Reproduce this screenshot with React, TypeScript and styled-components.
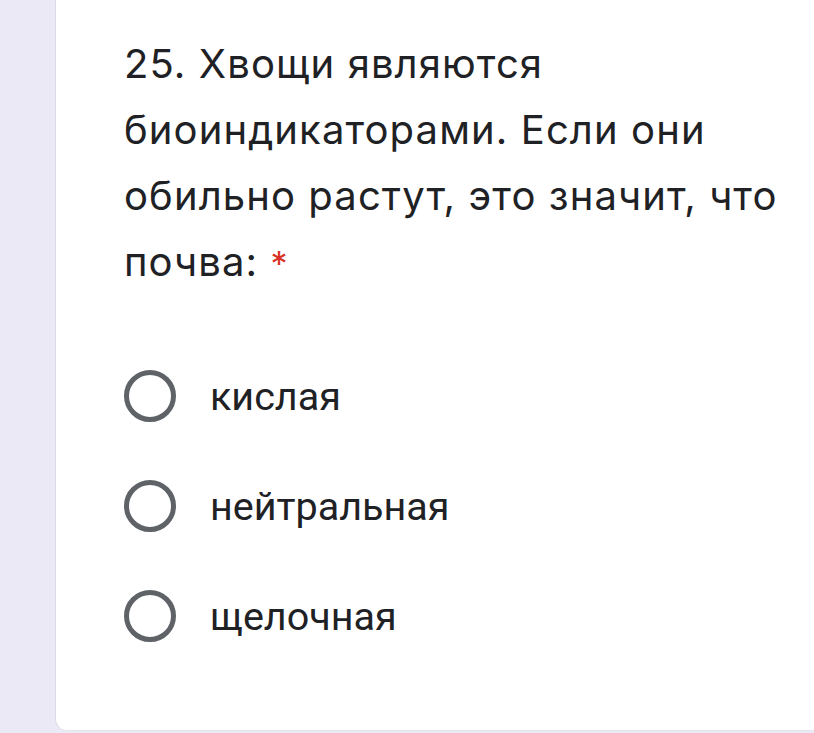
import React from "react";
import styled, { createGlobalStyle } from "styled-components";

const Global = createGlobalStyle`
  html, body { margin: 0; padding: 0; background: #ece9f7; }
  body { width: 814px; height: 733px; overflow: hidden; }
`;

const Page = styled.div`
  display: flex;
  height: 733px;
  padding-left: 55px;
  box-sizing: border-box;
`;

const Card = styled.div`
  flex: 1;
  height: 731px;
  background: #ffffff;
  border-left: 1px solid #dcdae3;
  border-bottom: 1px solid #e6e4ec;
  border-bottom-left-radius: 12px;
  box-sizing: border-box;
  padding: 31px 0 0 68px;
  display: flex;
  flex-direction: column;
`;

const Question = styled.div`
  font-family: "Inter", "Roboto", sans-serif;
  font-size: 40px;
  letter-spacing: 1.1px;
  line-height: 66px;
  color: #202124;
  width: 685px;
`;

const Star = styled.span`
  color: #d93025;
  font-size: 34px;
`;

const Options = styled.div`
  margin-top: 44px;
  display: flex;
  flex-direction: column;
`;

const Option = styled.label`
  display: flex;
  align-items: center;
  height: 110px;
  gap: 34px;
`;

const Radio = styled.span`
  width: 52px;
  height: 52px;
  box-sizing: border-box;
  border: 5px solid #5f6368;
  border-radius: 50%;
  flex: none;
`;

const OptionText = styled.span`
  font-family: "Roboto", sans-serif;
  font-size: 39.5px;
  color: #202124;
`;

const opts = ["кислая", "нейтральная", "щелочная"];

export default function App() {
  return (
    <>
      <Global />
      <Page>
        <Card>
          <Question>
            25. Хвощи являются биоиндикаторами. Если они обильно растут, это значит, что почва:{" "}
            <Star>*</Star>
          </Question>
          <Options>
            {opts.map((o) => (
              <Option key={o}>
                <Radio />
                <OptionText>{o}</OptionText>
              </Option>
            ))}
          </Options>
        </Card>
      </Page>
    </>
  );
}
